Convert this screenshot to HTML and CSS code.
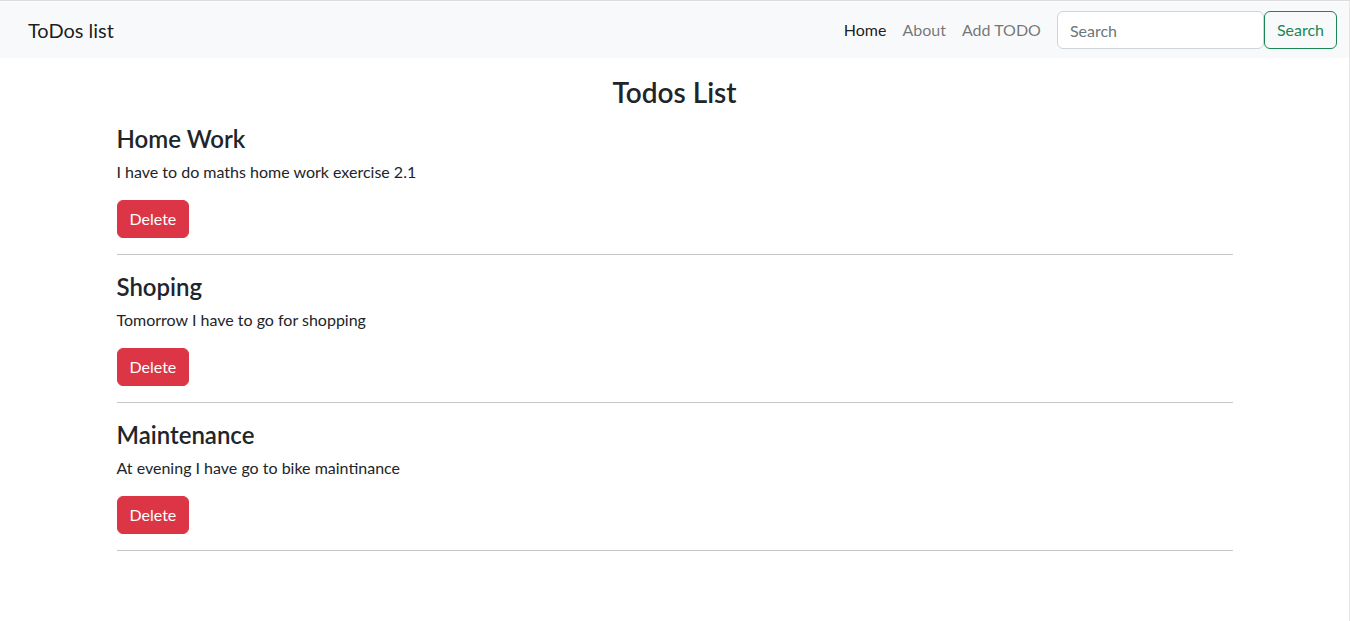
FILE: index.html
```html
<!DOCTYPE html>
<html lang="en">
<head>
<meta charset="utf-8">
<title>ToDos list</title>
<link rel="stylesheet" href="styles.css">
</head>
<body>
<nav class="navbar">
  <a class="brand" href="#">ToDos list</a>
  <div class="nav-right">
    <ul class="nav-links">
      <li><a class="nav-link active" href="#">Home</a></li>
      <li><a class="nav-link" href="#">About</a></li>
      <li><a class="nav-link" href="#">Add TODO</a></li>
    </ul>
    <form class="search-form">
      <input class="search-input" type="search" placeholder="Search">
      <button class="btn-search" type="button">Search</button>
    </form>
  </div>
</nav>
<main class="container">
  <h3 class="page-title">Todos List</h3>
  <div class="todo">
    <h4 class="todo-title">Home Work</h4>
    <p class="todo-desc">I have to do maths home work exercise 2.1</p>
    <button class="btn-delete" type="button">Delete</button>
  </div>
  <hr class="sep">
  <div class="todo">
    <h4 class="todo-title">Shoping</h4>
    <p class="todo-desc">Tomorrow I have to go for shopping</p>
    <button class="btn-delete" type="button">Delete</button>
  </div>
  <hr class="sep">
  <div class="todo">
    <h4 class="todo-title">Maintenance</h4>
    <p class="todo-desc">At evening I have go to bike maintinance</p>
    <button class="btn-delete" type="button">Delete</button>
  </div>
  <hr class="sep">
</main>
</body>
</html>
```
FILE: styles.css
```css
* { box-sizing: border-box; }
html { border-top: 1px solid #dadada; border-right: 1px solid #e6e6e6; min-height: 100%; }
body {
  margin: 0;
  font-family: Lato, "Noto Sans", sans-serif;
  font-size: 16px;
  line-height: 1.5;
  color: #212529;
  background: #fff;
}
.navbar {
  margin-top: 1px;
  background: #f8f9fa;
  height: 56px;
  display: flex;
  align-items: center;
  justify-content: space-between;
  padding: 0 12px 0 28px;
}
.brand {
  font-size: 20px;
  color: rgba(0,0,0,.9);
  text-decoration: none;
}
.nav-right { display: flex; align-items: center; }
.nav-links { display: flex; list-style: none; margin: 0 8px 0 0; padding: 0; }
.nav-link {
  display: block;
  padding: 8px 8px;
  color: rgba(0,0,0,.55);
  text-decoration: none;
}
.nav-link.active { color: rgba(0,0,0,.9); }
.search-form { display: flex; }
.search-input {
  width: 207px;
  height: 38px;
  padding: 6px 12px;
  font: inherit;
  font-size: 16px;
  color: #212529;
  border: 1px solid #ced4da;
  border-radius: 6px;
  background: #fff;
}
.search-input::placeholder { color: #6c757d; }
.btn-search {
  height: 38px;
  padding: 6px 12px;
  font: inherit;
  font-size: 16px;
  color: #198754;
  background: transparent;
  border: 1px solid #198754;
  border-radius: 6px;
}
.container {
  max-width: 1140px;
  margin: 0 auto;
  padding: 18px 12px 0;
}
.page-title {
  margin: 0 0 15px;
  text-align: center;
  font-size: 28px;
  font-weight: 600;
  line-height: 1.2;
}
.todo-title {
  margin: 0 0 7px;
  font-size: 24px;
  font-weight: 600;
  line-height: 28px;
}
.todo-desc { margin: 0 0 16px; }
.btn-delete {
  height: 38px;
  padding: 6px 12px;
  font: inherit;
  font-size: 16px;
  color: #fff;
  background: #dc3545;
  border: 1px solid #dc3545;
  border-radius: 6px;
}
.sep {
  margin: 16px 0 18px;
  border: 0;
  border-top: 1px solid #c6c7c8;
}
```
